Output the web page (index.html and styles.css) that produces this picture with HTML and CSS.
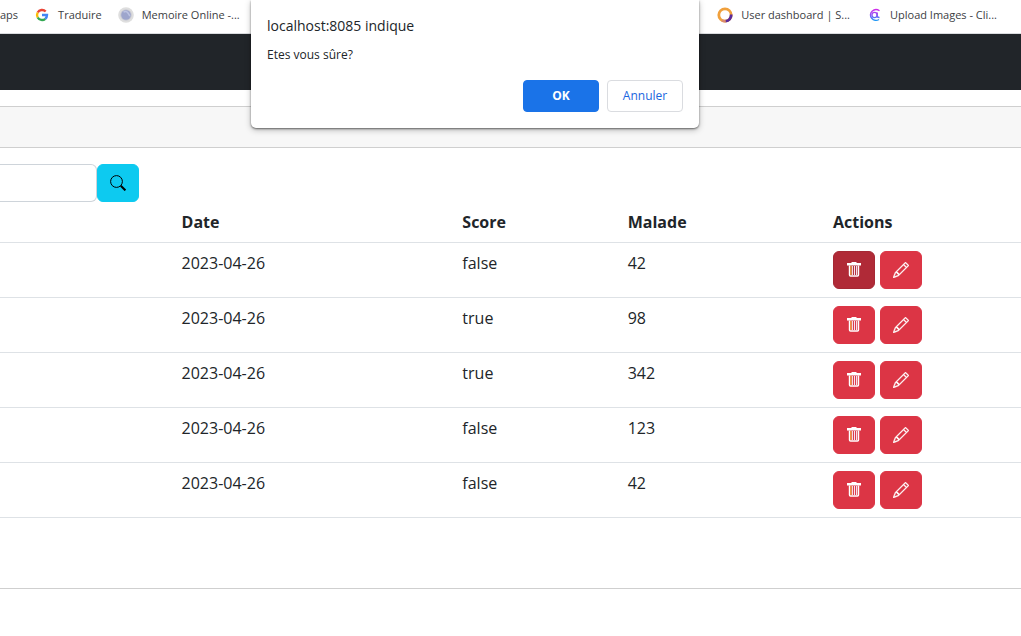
FILE: index.html
```html
<!DOCTYPE html>
<html lang="fr">
<head>
<meta charset="utf-8">
<meta name="viewport" content="width=device-width, initial-scale=1">
<title>Consultations</title>
<link rel="stylesheet" href="styles.css">
</head>
<body>
<svg class="defs" aria-hidden="true">
  <symbol id="trash" viewBox="0 0 16 16">
    <path d="M5.500 0h5v1H15v2.500H1V1h4.500z" fill="currentColor"/>
    <path d="M3.500 3.500V13q0 1 1 1h7q1 0 1-1V3.500" fill="none" stroke="currentColor" stroke-width="1.400"/>
    <path d="M4.900 4v9" fill="none" stroke="#f2a93b" stroke-width="1.200"/>
    <path d="M6.400 4v9M8.500 4v9M10.600 4v9" fill="none" stroke="#f6e6f2" stroke-width="1.100"/>
  </symbol>
  <symbol id="pencil" viewBox="0 0 16 16">
    <path fill="currentColor" stroke="currentColor" stroke-width=".3" d="M12.146.146a.5.5 0 0 1 .708 0l3 3a.5.5 0 0 1 0 .708l-10 10a.5.5 0 0 1-.168.110l-5 2a.5.5 0 0 1-.65-.65l2-5a.5.5 0 0 1 .110-.168zM11.207 2.500 13.500 4.793 14.793 3.500 12.500 1.207zm1.586 3L10.500 3.207 4 9.707V10h.5a.5.5 0 0 1 .5.5v.5h.5a.5.5 0 0 1 .5.5v.5h.293zm-9.761 5.175-.106.106-1.528 3.821 3.821-1.528.106-.106A.5.5 0 0 1 5 12.500V12h-.5a.5.5 0 0 1-.5-.5V11h-.5a.5.5 0 0 1-.468-.325"/>
  </symbol>
</svg>

<nav class="bookmarks" aria-label="Favoris">
  <div class="bookmark-group">
    <a class="bookmark" href="#">aps</a>
    <a class="bookmark" href="#">
      <svg class="favicon" viewBox="0 0 16 16" fill="none" stroke-width="2.400">
        <path d="M3.700 5.500A5 5 0 0 1 11.700 4.500" stroke="#ea4335"/>
        <path d="M3.700 10.500a5 5 0 0 1 0-5" stroke="#fbbc05"/>
        <path d="M11.300 11.800a5 5 0 0 1-7.600-1.300" stroke="#34a853"/>
        <path d="M8 8h5a5 5 0 0 1-1.700 3.800" stroke="#4285f4"/>
      </svg>
      Traduire
    </a>
    <a class="bookmark" href="#">
      <svg class="favicon" viewBox="0 0 16 16">
        <circle cx="8" cy="8" r="7.800" fill="#dedede"/>
        <circle cx="8" cy="8" r="5.800" fill="#c9cad3"/>
        <circle cx="8" cy="8" r="4.800" fill="#9da5cc"/>
        <path d="M5.500 5q3-1.500 4.500 1t2 3" fill="none" stroke="#bcc3e2" stroke-width="1.500"/>
      </svg>
      Memoire Online -...
    </a>
  </div>
  <div class="bookmark-group">
    <a class="bookmark" href="#">
      <svg class="favicon" viewBox="0 0 16 16" fill="none" stroke-width="2.800">
        <circle cx="8" cy="8" r="6.200" stroke="#f0a03c"/>
        <path d="M14.200 7.500A6.200 6.200 0 0 1 8.500 14.200" stroke="#5a2a9c"/>
        <path d="M8.500 14.200a6.200 6.200 0 0 1-3.500-.8" stroke="#d98a70"/>
      </svg>
      User dashboard | S...
    </a>
    <a class="bookmark" href="#">
      <svg class="favicon" viewBox="0 0 16 16" fill="none" stroke="url(#cloud)" stroke-width="1.400">
        <defs><linearGradient id="cloud" gradientUnits="userSpaceOnUse" x1="8" y1="2" x2="8" y2="14"><stop offset="0" stop-color="#d32be8"/><stop offset=".5" stop-color="#8f52f5"/><stop offset="1" stop-color="#169df5"/></linearGradient></defs>
        <path d="M13.500 3.800A5.600 5.300 0 1 0 13 12.500"/>
        <circle cx="8.500" cy="8" r="2.600"/>
        <path d="M11.200 5.500V9q0 1.500 2.300 1.500"/>
      </svg>
      Upload Images - Cli...
    </a>
  </div>
</nav>

<header class="navbar"></header>

<main class="card">
  <div class="card-header"></div>
  <div class="card-body">
    <form class="search">
      <input class="search-input" type="text" aria-label="Rechercher">
      <button class="btn btn-info" type="button" aria-label="Lancer la recherche">
        <svg class="icon" viewBox="0 0 16 16" fill="none" stroke="currentColor">
          <circle cx="6.500" cy="6.500" r="5.900" stroke-width="1"/>
          <path d="m10.800 10.800 4.600 4.600" stroke-width="2"/>
        </svg>
      </button>
    </form>
    <table class="table">
      <colgroup><col class="col-lead"><col class="col-date"><col class="col-score"><col class="col-malade"><col></colgroup>
      <thead>
        <tr><th></th><th>Date</th><th>Score</th><th>Malade</th><th>Actions</th></tr>
      </thead>
      <tbody>
        <tr><td></td><td>2023-04-26</td><td>false</td><td>42</td><td><div class="actions"><button class="btn btn-danger active" aria-label="Supprimer"><svg class="icon"><use href="#trash"/></svg></button><button class="btn btn-danger" aria-label="Modifier"><svg class="icon"><use href="#pencil"/></svg></button></div></td></tr>
        <tr><td></td><td>2023-04-26</td><td>true</td><td>98</td><td><div class="actions"><button class="btn btn-danger" aria-label="Supprimer"><svg class="icon"><use href="#trash"/></svg></button><button class="btn btn-danger" aria-label="Modifier"><svg class="icon"><use href="#pencil"/></svg></button></div></td></tr>
        <tr><td></td><td>2023-04-26</td><td>true</td><td>342</td><td><div class="actions"><button class="btn btn-danger" aria-label="Supprimer"><svg class="icon"><use href="#trash"/></svg></button><button class="btn btn-danger" aria-label="Modifier"><svg class="icon"><use href="#pencil"/></svg></button></div></td></tr>
        <tr><td></td><td>2023-04-26</td><td>false</td><td>123</td><td><div class="actions"><button class="btn btn-danger" aria-label="Supprimer"><svg class="icon"><use href="#trash"/></svg></button><button class="btn btn-danger" aria-label="Modifier"><svg class="icon"><use href="#pencil"/></svg></button></div></td></tr>
        <tr><td></td><td>2023-04-26</td><td>false</td><td>42</td><td><div class="actions"><button class="btn btn-danger" aria-label="Supprimer"><svg class="icon"><use href="#trash"/></svg></button><button class="btn btn-danger" aria-label="Modifier"><svg class="icon"><use href="#pencil"/></svg></button></div></td></tr>
      </tbody>
    </table>
  </div>
</main>

<div class="dialog" role="alertdialog" aria-labelledby="dialog-title" aria-describedby="dialog-text">
  <h1 class="dialog-title" id="dialog-title">localhost:8085 indique</h1>
  <p class="dialog-text" id="dialog-text">Etes vous sûre?</p>
  <div class="dialog-actions">
    <button class="dialog-btn primary">OK</button>
    <button class="dialog-btn">Annuler</button>
  </div>
</div>
</body>
</html>
```

FILE: styles.css
```css
* { box-sizing: border-box; }

body {
  margin: 0;
  background: #fff;
  color: #212529;
  font: 16px/24px "Open Sans", "Noto Sans", sans-serif;
}

button, input { font: inherit; }

.defs { position: absolute; width: 0; height: 0; }

.bookmarks {
  display: flex;
  justify-content: space-between;
  height: 34px;
  padding: 0 24px 3px 0;
  border-bottom: 1px solid #dadcdf;
  font-size: 11px;
}

.bookmark-group { display: flex; gap: 16px; }

.bookmark {
  display: flex;
  align-items: center;
  gap: 8px;
  color: #3c4043;
  text-decoration: none;
  white-space: nowrap;
}

.favicon { width: 16px; height: 16px; }

.navbar { height: 56px; background: #212529; }

.card {
  margin-top: 16px;
  border: 1px solid #cfcfcf;
  border-width: 1px 0;
}

.card-header {
  height: 41px;
  background: #f7f7f7;
  border-bottom: 1px solid #cfcfcf;
}

.card-body { padding: 16px 0 70px; }

.search { display: flex; }

.search-input {
  width: 97px;
  height: 38px;
  padding: 6px 12px;
  border: 1px solid #ced4da;
  border-left: 0;
  border-radius: 0 6px 6px 0;
}

.btn {
  display: flex;
  align-items: center;
  justify-content: center;
  width: 42px;
  height: 38px;
  padding: 0;
  border: 1px solid transparent;
  border-radius: 6px;
}

.btn-info { background: #0dcaf0; border-color: #0dcaf0; color: #000; }
.btn-danger { background: #dc3545; border-color: #dc3545; color: #fff; }
.btn-danger.active { background: #b02a37; border-color: #a52834; }

.icon { width: 16px; height: 16px; }

.table {
  width: 100%;
  table-layout: fixed;
  border-collapse: separate;
  border-spacing: 0;
}

.col-lead { width: 17%; }
.col-date { width: 27.5%; }
.col-score { width: 16.2%; }
.col-malade { width: 20.1%; }

.table th, .table td {
  padding: 8px;
  border-bottom: 1px solid #dee2e6;
  text-align: left;
  vertical-align: top;
}

.actions { display: flex; gap: 5px; }

.dialog {
  position: absolute;
  top: 0;
  left: 251px;
  width: 448px;
  padding: 16px;
  background: #fff;
  border-radius: 0 0 5px 5px;
  box-shadow: 0 1px 2px rgba(0, 0, 0, .5), 0 2px 6px rgba(0, 0, 0, .25);
}

.dialog-title {
  margin: 0 0 9px;
  font-size: 14px;
  font-weight: 400;
  line-height: 20px;
}

.dialog-text {
  margin: 0 0 15px;
  font-size: 12px;
  line-height: 20px;
}

.dialog-actions {
  display: flex;
  justify-content: flex-end;
  gap: 8px;
}

.dialog-btn {
  width: 76px;
  height: 32px;
  padding: 0;
  border: 1px solid #dadce0;
  border-radius: 4px;
  background: #fff;
  color: #1a66e0;
  font-size: 12px;
  font-weight: 500;
}

.dialog-btn.primary {
  background: #1a73e8;
  border-color: #1a73e8;
  color: #fff;
  font-weight: 700;
}
```
